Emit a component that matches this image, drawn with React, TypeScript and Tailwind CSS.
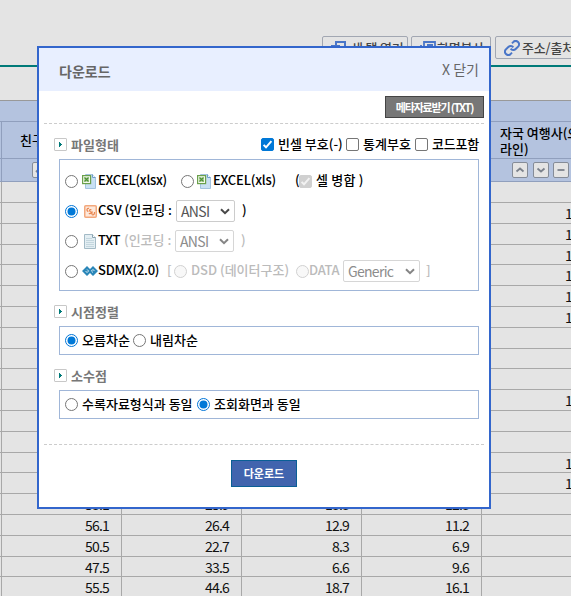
import type { ReactNode } from "react";

const rows: { h: string; v: string[] }[] = [
  { h: "h-[21px]", v: ["", "", "", "", ""] },
  { h: "h-[21px]", v: ["", "", "", "", "17.2"] },
  { h: "h-[21px]", v: ["", "", "", "", "15.4"] },
  { h: "h-[20px]", v: ["", "", "", "", "16.8"] },
  { h: "h-[21px]", v: ["", "", "", "", "14.1"] },
  { h: "h-[21px]", v: ["", "", "", "", "18.3"] },
  { h: "h-[21px]", v: ["", "", "", "", "12.6"] },
  { h: "h-[21px]", v: ["", "", "", "", ""] },
  { h: "h-[20px]", v: ["", "", "", "", ""] },
  { h: "h-[21px]", v: ["", "", "", "", ""] },
  { h: "h-[21px]", v: ["", "", "", "", "13.5"] },
  { h: "h-[21px]", v: ["", "", "", "", ""] },
  { h: "h-[21px]", v: ["", "", "", "", ""] },
  { h: "h-[20px]", v: ["", "", "", "", "11.9"] },
  { h: "h-[21px]", v: ["", "", "", "", "14.0"] },
  { h: "h-[21px]", v: ["53.1", "25.9", "13.3", "12.3", ""] },
  { h: "h-[21px]", v: ["56.1", "26.4", "12.9", "11.2", ""] },
  { h: "h-[21px]", v: ["50.5", "22.7", "8.3", "6.9", ""] },
  { h: "h-[20px]", v: ["47.5", "33.5", "6.6", "9.6", ""] },
  { h: "h-[21px]", v: ["55.5", "44.6", "18.7", "16.1", ""] },
];

function Radio({ on, off }: { on?: boolean; off?: boolean }) {
  return (
    <svg viewBox="0 0 13 13" className="size-[13px] shrink-0">
      <circle cx="6.5" cy="6.5" r="6" fill={off ? "#f8f8f8" : "#fff"} stroke={on ? "#0075d7" : off ? "#d0d0d0" : "#767676"} />
      {on && <circle cx="6.5" cy="6.5" r="4" fill="#0078d7" />}
    </svg>
  );
}

function Check({ on, off }: { on?: boolean; off?: boolean }) {
  return (
    <svg viewBox="0 0 13 13" className="size-[13px] shrink-0">
      <rect x=".5" y=".5" width="12" height="12" rx="1.5" fill={on ? (off ? "#d0d0d0" : "#0078d7") : "#fff"} stroke={on ? (off ? "#d0d0d0" : "#0078d7") : "#767676"} />
      {on && <path d="M2.6 6.9 5 9.3 10.4 3.2" fill="none" stroke={off ? "#f2f2f2" : "#fff"} strokeWidth="2" />}
    </svg>
  );
}

function Excel() {
  return (
    <svg viewBox="0 0 14 15" className="h-[15px] w-[14px] shrink-0">
      <path d="M3.5.5h7l3 3v11h-10z" fill="#c9e0f4" stroke="#a3c3df" />
      <path d="M10.5.5v3h3" fill="#eef6fc" stroke="#6f9dc9" />
      <rect x=".6" y="1.6" width="8" height="8" fill="#f3faec" stroke="#6ba04c" strokeWidth="1.2" />
      <path d="M2.3 3.5h4.6v4.2H2.3z" fill="#a9cf95" />
      <path d="m2.5 3.5 4 4M6.5 3.5l-4 4" stroke="#4d8f36" strokeWidth="1.1" />
    </svg>
  );
}

function Csv() {
  return (
    <svg viewBox="0 0 13 13" className="size-[13px] shrink-0">
      <rect x=".75" y=".75" width="11.5" height="11.5" rx="1" fill="#fde9dc" stroke="#f3a87c" strokeWidth="1.5" />
      <path d="M5 3.4C3 2.6 1.9 6 4.4 6.3M7.4 4.8C5.2 4.2 5 6 6.5 6.8c1.6.8.4 2.4-1.7 1.6M8.2 6.3c-.5 2.2-.4 3.7.7 3.7 1.2 0 1.6-1.3 1.7-3" fill="none" stroke="#e98650" strokeWidth="1.2" />
    </svg>
  );
}

function Txt() {
  return (
    <svg viewBox="0 0 12 15" className="h-[15px] w-[12px] shrink-0">
      <path d="M.5.5h8l3 3v11H.5z" fill="#e3eef3" stroke="#a3bac6" />
      <path d="M2 4.5h6M2 6.5h8M2 8.5h8M2 10.5h8M2 12.5h8" stroke="#c3d6de" />
      <path d="M8.5.5v3h3" fill="#fff" stroke="#88a2b0" />
    </svg>
  );
}

function Sdmx() {
  return (
    <svg viewBox="0 0 16 10" className="h-[10px] w-[16px] shrink-0">
      <path d="M5 0 0 5l5 5 3-3 3 3 5-5-5-5-3 3z" fill="#2a86b8" />
      <path d="M5 3.4 6.6 5 5 6.6 3.6 5M11 6.6 9.4 5 11 3.4 12.4 5" fill="none" stroke="#cfe6f1" strokeWidth="1" />
    </svg>
  );
}

function Select({ label, w, off }: { label: string; w: string; off?: boolean }) {
  return (
    <div className={`flex h-[22px] shrink-0 items-center justify-between rounded-[2px] border bg-white pr-[4px] pl-[4px] text-[14px] leading-[20px] font-normal ${w} ${off ? "border-[#d6d6d6] text-[#8c8c8c]" : "border-[#ccc] text-[#555]"}`}>
      <span className="tracking-[-0.7px]">{label}</span>
      <svg viewBox="0 0 10 7" className="h-[7px] w-[10px]">
        <path d="m1 1.2 4 4 4-4" fill="none" stroke={off ? "#858585" : "#484848"} strokeWidth="2" />
      </svg>
    </div>
  );
}

function Slot({ w, children, className = "" }: { w: string; children?: ReactNode; className?: string }) {
  return <div className={`flex shrink-0 items-center whitespace-nowrap ${w} ${className}`}>{children}</div>;
}

function Label({ w, children, className = "" }: { w: string; children: ReactNode; className?: string }) {
  return <span className={`block shrink-0 pb-[3px] whitespace-nowrap ${w} ${className}`}>{children}</span>;
}

function Heading({ children }: { children: ReactNode }) {
  return (
    <div className="flex h-[19px] items-center text-[13px] font-bold text-[#777]">
      <span className="mr-[4px] flex size-[13px] items-center justify-center rounded-[1px] border border-[#c8c8c8]">
        <svg viewBox="0 0 3 5" className="h-[5px] w-[3px] shrink-0"><path d="M0 0h1v1h1v1h1v1H2v1H1v1H0z" fill="#007a78" /></svg>
      </span>
      {children}
    </div>
  );
}

function SortButton({ d }: { d: string }) {
  return (
    <span className="flex size-[16px] items-center justify-center rounded-[2px] border border-[#858c98] bg-[#e4e4e4]">
      <svg viewBox="0 0 10 10" className="size-[10px] shrink-0"><path d={d} fill="none" stroke="#7b818b" strokeWidth="1.8" /></svg>
    </span>
  );
}

function ToolButton({ w, icon, children }: { w: string; icon: ReactNode; children: ReactNode }) {
  return (
    <div className={`flex h-[23px] shrink-0 items-center gap-[2px] rounded-[2px] border border-[#a2a7b2] pl-[8px] text-[13px] font-medium whitespace-nowrap text-[#444] ${w}`}>
      {icon}
      <span className="tracking-[-0.2px]">{children}</span>
    </div>
  );
}

function Background() {
  return (
    <div className="flex h-[600px] w-[601px] flex-col">
      <div className="flex h-[67px] shrink-0 items-start border-b-2 border-[#007a78] pt-[36px] pl-[322px]">
        <ToolButton w="w-[86px] mr-[3px]" icon={<svg viewBox="0 0 15 14" className="h-[14px] w-[15px]"><path d="M5 1h9v9H5zM1 5h7v8H1z" fill="none" stroke="#4a76c8" strokeWidth="2" /></svg>}>
          <span className="pl-[3px]">새 탭 열기</span>
        </ToolButton>
        <ToolButton w="w-[80px] mr-[4px]" icon={<svg viewBox="0 0 16 14" className="h-[14px] w-[16px]"><path d="M4 1h11v9H4zM1 4v9h11M7 4h6M7 7h6" fill="none" stroke="#4a76c8" strokeWidth="1.8" /></svg>}>
          <span className="-ml-px">화면복사</span>
        </ToolButton>
        <ToolButton w="w-[100px]" icon={
          <svg viewBox="0 0 24 24" className="size-[16px]" fill="none" stroke="#4a76c8" strokeWidth="3">
            <path d="M10 13a5 5 0 0 0 7.5.5l4-4a5 5 0 0 0-7-7L12 5M14 11a5 5 0 0 0-7.5-.5l-4 4a5 5 0 0 0 7 7L12 19" />
          </svg>
        }>주소/출처</ToolButton>
      </div>
      <div className="mt-[33px] shrink-0 border-t border-[#999] bg-[#b4c3df]">
        <div className="h-[21px] border-b border-[#909fbd]" />
        <div className="flex h-[37px] border-b border-[#909fbd] text-[13px] leading-[16px] font-medium">
          <div className="ml-px flex w-[120px] items-center border-l border-[#909fbd] pl-[18px]">친구, 친지</div>
          <div className="w-[360px]" />
          <div className="flex-1 pt-[3px] pl-[19px] whitespace-nowrap">자국 여행사(오프<br />라인)</div>
        </div>
        <div className="flex h-[23px] items-center border-b border-[#909fbd]">
          <div className="ml-px flex h-[22px] w-[480px] items-center border-l border-[#909fbd] pl-[30px]"><SortButton d="m1 7 4-4 4 4" /></div>
          <div className="flex gap-[5px] pl-[31px]">
            <SortButton d="m1.5 6.5 3.5-3 3.5 3" />
            <SortButton d="m1.5 3.5 3.5 3 3.5-3" />
            <span className="-ml-px"><SortButton d="M1.5 5h7" /></span>
          </div>
        </div>
      </div>
      <div className="flex shrink-0 flex-col text-[14px] leading-[20px] tracking-[-0.8px] text-[#111]">
        {rows.map((r, i) => (
          <div key={i} className={`flex shrink-0 border-b border-[#a8a8a8] pl-px ${r.h}`}>
            {r.v.map((v, j) => (
              <div key={j} className="w-[120px] border-l border-[#a8a8a8] pr-[12px] text-right">{v}</div>
            ))}
          </div>
        ))}
      </div>
    </div>
  );
}

export default function App() {
  return (
    <div className="relative h-[596px] w-[571px] overflow-hidden bg-[#e4e4e4] font-['Noto_Sans_CJK_KR',sans-serif] text-black">
      <Background />
      <div className="absolute top-[46px] left-[37px] flex h-[463px] w-[454px] flex-col border-2 border-[#3366cc] bg-white text-[13px] leading-[19px] font-medium">
        <div className="flex h-[43px] shrink-0 items-center justify-between bg-[#e8efff] pr-[10px] pl-[20px] text-[#666]">
          <span className="pt-[4px] text-[14px] font-bold">다운로드</span>
          <span className="text-[14px] font-normal">X 닫기</span>
        </div>
        <div className="mx-[5px] flex h-[33px] shrink-0 items-start justify-end border-b border-dashed border-[#ccc] pt-[5px]">
          <div className="flex h-[22px] w-[99px] items-center justify-center border border-[#444] bg-[#777] text-[11px] font-bold tracking-[-1.2px] text-white">메타자료받기 (TXT)</div>
        </div>
        <div className="flex flex-col pt-[11px] pl-[15px]">
          <div className="flex h-[19px] items-center">
            <Slot w="w-[207px]"><Heading>파일형태</Heading></Slot>
            <Check on />
            <Label w="w-[72px]" className="pl-[4px]">빈셀 부호(-)</Label>
            <Check />
            <Label w="w-[56px]" className="pl-[4px]">통계부호</Label>
            <Check />
            <Label w="w-[56px]" className="pl-[4px] tracking-[-0.2px]">코드포함</Label>
          </div>
          <div className="mt-[5px] ml-[5px] flex h-[132px] w-[420px] flex-col border border-[#a0b6d8] pt-[6px] pl-[5px]">
            <div className="flex h-[30px] items-center">
              <Slot w="w-[17px]"><Radio /></Slot>
              <Slot w="w-[16px]"><Excel /></Slot>
              <Label w="w-[83px]" className="tracking-[-0.25px]">EXCEL(xlsx)</Label>
              <Slot w="w-[16px]"><Radio /></Slot>
              <Slot w="w-[16px]"><Excel /></Slot>
              <Label w="w-[82px]" className="tracking-[-0.2px]">EXCEL(xls)</Label>
              <Label w="w-[4px]">(</Label>
              <Check on off />
              <Label w="w-[60px]" className="pl-[4px] tracking-[0.2px]">셀 병합 )</Label>
            </div>
            <div className="flex h-[30px] items-center">
              <Slot w="w-[19px]"><Radio on /></Slot>
              <Slot w="w-[14px]"><Csv /></Slot>
              <Label w="w-[78px]">CSV (인코딩 :</Label>
              <Slot w="w-[66px]"><Select label="ANSI" w="w-[59px]" /></Slot>
              <Label w="w-[10px]">)</Label>
            </div>
            <div className="flex h-[30px] items-center text-[#bbb]">
              <Slot w="w-[19px]"><Radio /></Slot>
              <Slot w="w-[14px]"><Txt /></Slot>
              <Label w="w-[26px]" className="tracking-[-0.3px] text-black">TXT</Label>
              <Label w="w-[51px]">(인코딩 :</Label>
              <Slot w="w-[66px]"><Select label="ANSI" w="w-[59px]" off /></Slot>
              <Label w="w-[10px]">)</Label>
            </div>
            <div className="flex h-[30px] items-center text-[#bbb]">
              <Slot w="w-[17px]"><Radio /></Slot>
              <Slot w="w-[16px]"><Sdmx /></Slot>
              <Label w="w-[69px]" className="tracking-[-0.25px] text-black">SDMX(2.0)</Label>
              <Label w="w-[7px]">[</Label>
              <Slot w="w-[17px]"><Radio off /></Slot>
              <Label w="w-[105px]">DSD (데이터구조)</Label>
              <Slot w="w-[13px]"><Radio off /></Slot>
              <Label w="w-[34px]" className="tracking-[-0.3px]">DATA</Label>
              <Slot w="w-[83px]"><Select label="Generic" w="w-[77px]" off /></Slot>
              <Label w="w-[10px]">]</Label>
            </div>
          </div>
          <div className="mt-[11px]"><Heading>시점정렬</Heading></div>
          <div className="mt-[5px] ml-[5px] flex h-[29px] w-[420px] items-center border border-[#a0b6d8] pl-[5px]">
            <Slot w="w-[17px]"><Radio on /></Slot>
            <Label w="w-[51px]">오름차순</Label>
            <Slot w="w-[17px]"><Radio /></Slot>
            <Label w="w-[60px]">내림차순</Label>
          </div>
          <div className="mt-[11px]"><Heading>소수점</Heading></div>
          <div className="mt-[5px] ml-[5px] flex h-[29px] w-[420px] items-center border border-[#a0b6d8] pl-[5px]">
            <Slot w="w-[17px]"><Radio /></Slot>
            <Label w="w-[115px]">수록자료형식과 동일</Label>
            <Slot w="w-[17px]"><Radio on /></Slot>
            <Label w="w-[100px]">조회화면과 동일</Label>
          </div>
        </div>
        <div className="mx-[5px] mt-[25px] flex justify-center border-t border-dashed border-[#ccc] pt-[15px]">
          <div className="flex h-[27px] w-[66px] items-center justify-center border border-[#0a5f96] bg-[#4164ae] text-[11px] font-bold text-white">다운로드</div>
        </div>
      </div>
    </div>
  );
}
